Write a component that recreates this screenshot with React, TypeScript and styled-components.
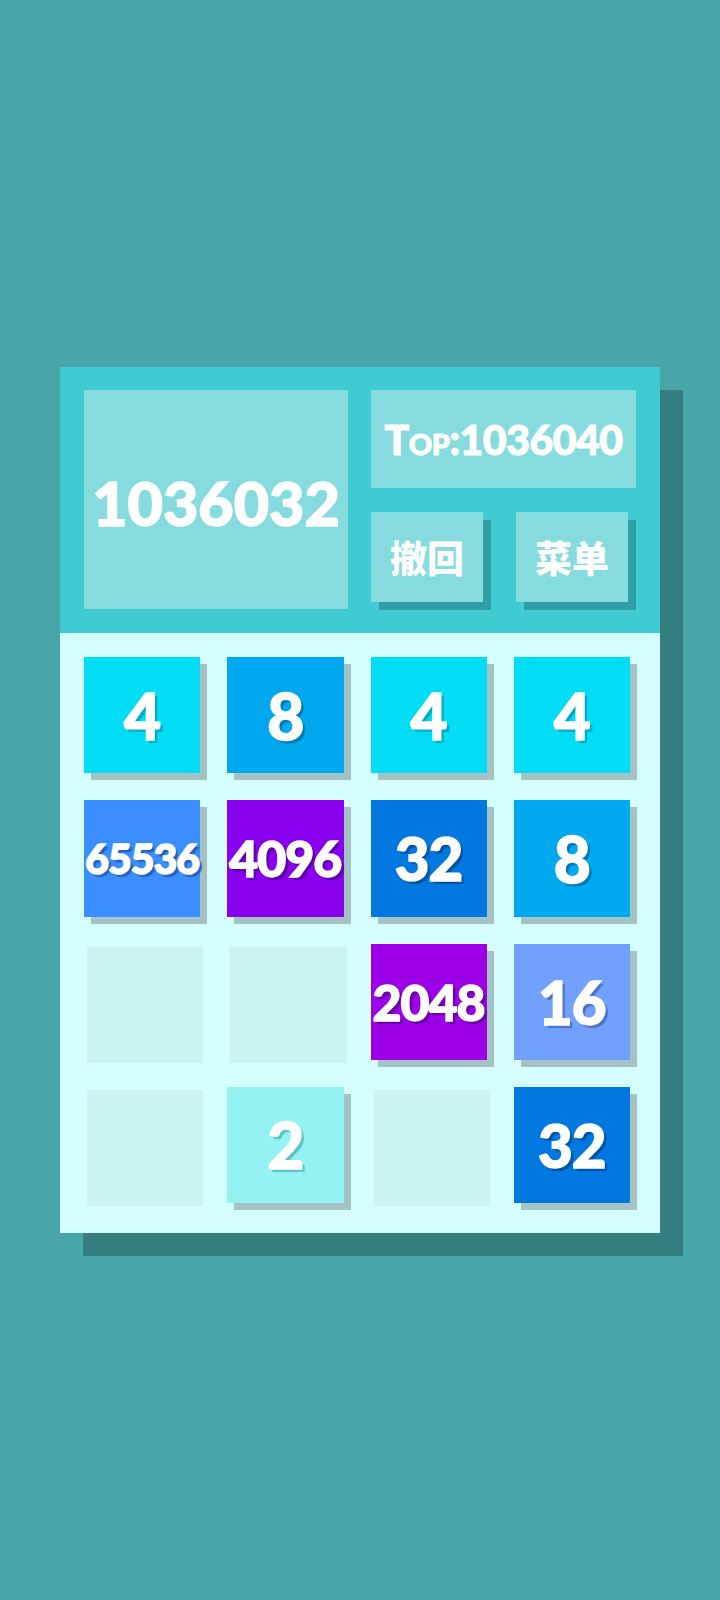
import * as React from 'react';
import styled, { createGlobalStyle } from 'styled-components';

const GlobalStyle = createGlobalStyle`
  html, body {
    margin: 0;
    padding: 0;
    background: #46a6a8;
  }
`;

const Page = styled.div`
  height: 1600px;
  display: flex;
  align-items: center;
  justify-content: center;
  font-family: Lato, "Noto Sans CJK SC", sans-serif;
`;

const Card = styled.div`
  width: 600px;
  box-shadow: 23px 23px 0 #357f80;
`;

const Header = styled.div`
  height: 266px;
  box-sizing: border-box;
  padding: 23px 24px 24px;
  display: flex;
  gap: 23px;
  background: #40cbd3;
`;

const ScoreBox = styled.div`
  width: 264px;
  display: flex;
  align-items: center;
  justify-content: center;
  background: #85dbde;
  color: #fff;
  font-size: 61px;
  font-weight: 900;
  -webkit-text-stroke: 1.5px #fff;
  padding-top: 6px;
  box-sizing: border-box;
`;

const Side = styled.div`
  flex: 1;
  display: flex;
  flex-direction: column;
  gap: 24px;
`;

const TopBox = styled.div`
  height: 98px;
  display: flex;
  align-items: center;
  justify-content: center;
  background: #85dbde;
  color: #fff;
  font-size: 41px;
  font-weight: 900;
  font-variant: small-caps;
  letter-spacing: -0.5px;
  -webkit-text-stroke: 1px #fff;
`;

const ButtonRow = styled.div`
  display: flex;
  justify-content: space-between;
  padding-right: 8px;
`;

const Button = styled.button`
  width: 112px;
  height: 90px;
  border: 0;
  padding: 0;
  background: #85dbde;
  box-shadow: 8px 8px 0 #2e9fa6;
  color: #fff;
  font-family: "Noto Sans CJK SC", sans-serif;
  font-size: 37px;
  font-weight: 900;
  cursor: pointer;
`;

const Board = styled.div`
  display: grid;
  grid-template-columns: repeat(4, 1fr);
  grid-auto-rows: 116.25px;
  gap: 27px;
  padding: 27px;
  background: #d5ffff;
`;

const Empty = styled.div`
  background: #c9f4f2;
`;

const Tile = styled.div<{ $bg: string; $shade: string; $size: number }>`
  display: flex;
  align-items: center;
  justify-content: center;
  transform: translate(-3px, -3px);
  background: ${(p) => p.$bg};
  box-shadow: 7px 7px 0 #a5c3c4;
  color: #fff;
  font-size: ${(p) => p.$size}px;
  font-weight: 900;
  letter-spacing: -1px;
  -webkit-text-stroke: 1.5px #fff;
  text-shadow: 3px 3px 1px ${(p) => p.$shade};
`;

const palette: Record<number, [string, string]> = {
  2: ['#94f2f2', '#5fc2c4'],
  4: ['#00ddf5', '#00a9c2'],
  8: ['#00a8f0', '#0078b8'],
  16: ['#72a0ff', '#4a72c8'],
  32: ['#0078e0', '#0052a6'],
  2048: ['#9b00e6', '#6a00a6'],
  4096: ['#8800ee', '#5c00aa'],
  65536: ['#3a8eff', '#2262c0'],
};

const sizes: Record<number, number> = { 1: 64, 2: 60, 3: 56, 4: 50, 5: 41 };

const grid = [
  [4, 8, 4, 4],
  [65536, 4096, 32, 8],
  [0, 0, 2048, 16],
  [0, 2, 0, 32],
];

export default function App() {
  return (
    <>
      <GlobalStyle />
      <Page>
        <Card>
          <Header>
            <ScoreBox>1036032</ScoreBox>
            <Side>
              <TopBox>Top:1036040</TopBox>
              <ButtonRow>
                <Button>撤回</Button>
                <Button>菜单</Button>
              </ButtonRow>
            </Side>
          </Header>
          <Board>
            {grid.flat().map((v, i) => {
              if (!v) return <Empty key={i} />;
              const [bg, shade] = palette[v];
              return (
                <Tile key={i} $bg={bg} $shade={shade} $size={sizes[String(v).length]}>
                  {v}
                </Tile>
              );
            })}
          </Board>
        </Card>
      </Page>
    </>
  );
}
